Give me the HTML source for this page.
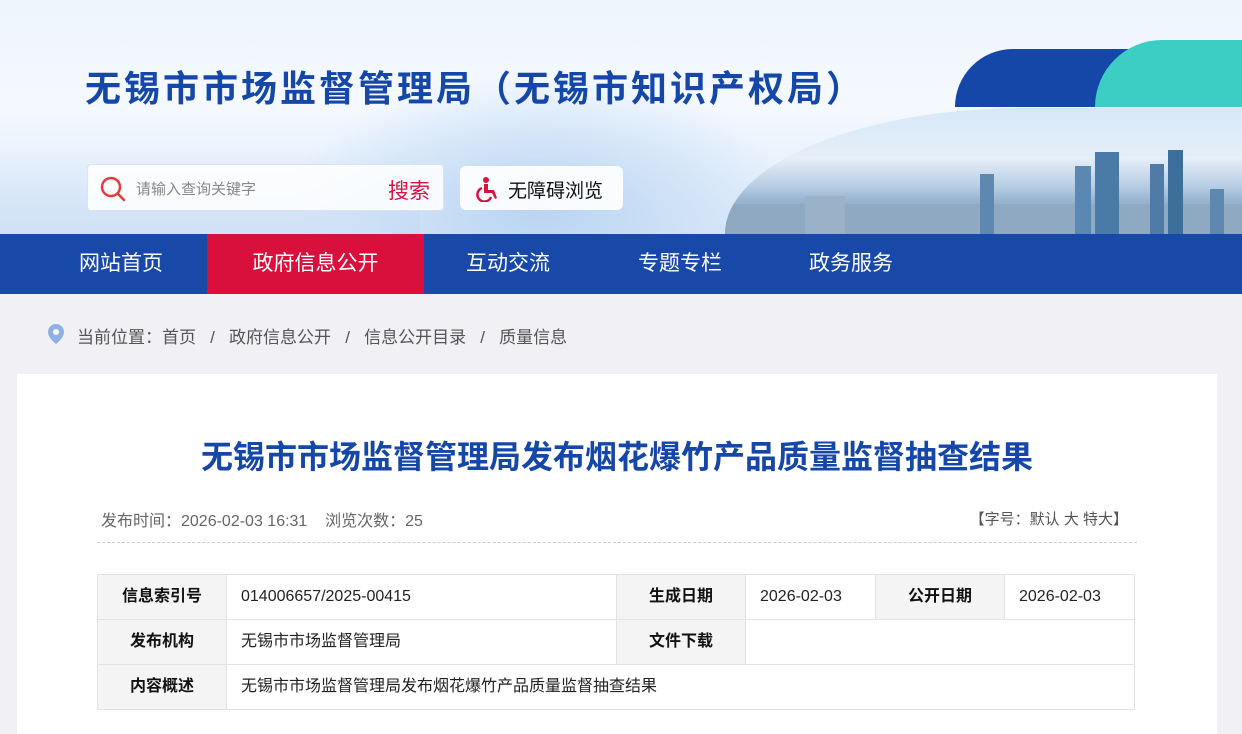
<!DOCTYPE html>
<html><head><meta charset="utf-8"><style>
*{margin:0;padding:0;box-sizing:border-box}
body{width:1242px;height:721px;overflow:hidden;background:#f1f1f5;font-family:"Liberation Sans","Noto Sans CJK SC",sans-serif;position:relative}
.hdr{position:absolute;left:0;top:0;width:1242px;height:234px;background:linear-gradient(180deg,#eef5fd 0%,#f5f9ff 45%,#dbe9f8 100%);overflow:hidden}
.bg1{position:absolute;left:300px;top:80px;width:480px;height:160px;background:radial-gradient(ellipse at 50% 80%,#b9d4f2 0%,rgba(200,222,247,.4) 55%,rgba(255,255,255,0) 75%)}
.bg0{position:absolute;left:0;top:150px;width:420px;height:90px;background:linear-gradient(180deg,rgba(220,234,250,0),#cfe1f6)}
.blue{position:absolute;left:955px;top:49px;width:500px;height:58px;background:#1547a8;border-radius:260px 0 0 0}
.teal{position:absolute;left:1095px;top:40px;width:400px;height:67px;background:#3ccdc5;border-radius:300px 0 0 0}
.city{position:absolute;left:725px;top:108px;width:520px;height:126px;border-radius:300px 0 0 0/126px 0 0 0;background:linear-gradient(180deg,#d6e8f8 0%,#e6eef8 40%,#b7cde4 62%,#8aa7c4 80%,#7594b3 100%);overflow:hidden}
.tw{position:absolute;bottom:0;background:#4f7ba6}
.title{position:absolute;left:85px;top:60px;font-size:36px;font-weight:bold;color:#1547a8;letter-spacing:3px;white-space:nowrap}
.search{position:absolute;left:87px;top:164px;width:357px;height:47px;background:rgba(255,255,255,.85);border:1px solid #dde3ec;border-radius:4px}
.search .ph{position:absolute;left:48px;top:13px;font-size:15px;color:#888}
.search .btn{position:absolute;left:300px;top:10px;font-size:21px;color:#d7133e}
.acc{position:absolute;left:460px;top:166px;width:163px;height:44px;background:rgba(255,255,255,.9);border-radius:6px}
.acc span{position:absolute;left:48px;top:10px;font-size:19px;color:#111}
.nav{position:absolute;left:0;top:234px;width:1242px;height:60px;background:#1848a8}
.nav div{position:absolute;top:0;height:60px;line-height:60px;color:#fff;font-size:21px}
.bc{position:absolute;left:77px;top:323px;font-size:17px;color:#555;white-space:pre}
.card{position:absolute;left:17px;top:374px;width:1200px;height:360px;background:#fff}
.h1{position:absolute;left:0;top:432px;width:1234px;text-align:center;font-size:32px;font-weight:bold;color:#1547a8}
.meta{position:absolute;left:101px;top:507px;font-size:16px;color:#666;white-space:pre}
.fz{position:absolute;right:114px;top:508px;font-size:15px;color:#555}
.dash{position:absolute;left:97px;top:542px;width:1040px;border-top:1px dashed #ccc}
table{position:absolute;left:97px;top:574px;width:1038px;border-collapse:collapse;font-size:16px}
td{border:1px solid #e2e2e2;height:45px;padding:0 0 0 14px;color:#222;vertical-align:middle;line-height:20px}
td.k{background:#f4f4f4;font-weight:bold;text-align:center;padding:0;color:#111}
</style></head><body>
<div class="hdr">
<div class="bg0"></div><div class="bg1"></div>
<div class="blue"></div><div class="teal"></div>
<div class="city">
<div class="tw" style="left:0;width:520px;height:30px;background:#8fa9c2"></div>
<div class="tw" style="left:80px;width:40px;height:38px;background:#9ab1c8"></div>
<div class="tw" style="left:255px;width:14px;height:60px;background:#5f88b0"></div>
<div class="tw" style="left:350px;width:16px;height:68px;background:#5b88b3"></div>
<div class="tw" style="left:370px;width:24px;height:82px;background:#4a7aa8"></div>
<div class="tw" style="left:425px;width:14px;height:70px;background:#4f7ba6"></div>
<div class="tw" style="left:443px;width:15px;height:84px;background:#3d6f9c"></div>
<div class="tw" style="left:485px;width:14px;height:45px;background:#5f88b0"></div>
</div>
<div class="title">无锡市市场监督管理局（无锡市知识产权局）</div>
<div class="search">
<svg style="position:absolute;left:11px;top:10px" width="28" height="28" viewBox="0 0 28 28"><circle cx="12" cy="12" r="9" fill="none" stroke="#e83a3a" stroke-width="2.5"/><path d="M19 19l6 6" stroke="#e83a3a" stroke-width="2.5" stroke-linecap="round"/></svg>
<span class="ph">请输入查询关键字</span><span class="btn">搜索</span></div>
<div class="acc">
<svg style="position:absolute;left:15px;top:10px" width="26" height="26" viewBox="0 0 26 26"><circle cx="11" cy="4" r="3" fill="#d7133e"/><path d="M9 8h4v6h6l3 8-2 1-3-6h-8z" fill="#d7133e"/><path d="M7 12a7 7 0 1 0 9 9" fill="none" stroke="#d7133e" stroke-width="2.5"/></svg>
<span>无障碍浏览</span></div>
</div>
<div class="nav">
<div style="left:79px">网站首页</div>
<div style="left:207px;width:217px;background:#d90f3c;text-align:center">政府信息公开</div>
<div style="left:466px">互动交流</div>
<div style="left:638px">专题专栏</div>
<div style="left:809px">政务服务</div>
</div>
<svg style="position:absolute;left:47px;top:323px" width="18" height="22" viewBox="0 0 18 22"><path d="M9 1a8 8 0 0 0-8 8c0 6 8 12 8 12s8-6 8-12a8 8 0 0 0-8-8z" fill="#8fb0e4"/><circle cx="9" cy="9" r="3" fill="#fff"/></svg>
<div class="bc">当前位置：首页   /   政府信息公开   /   信息公开目录   /   质量信息</div>
<div class="card"></div>
<div class="h1">无锡市市场监督管理局发布烟花爆竹产品质量监督抽查结果</div>
<div class="meta">发布时间：2026-02-03 16:31    浏览次数：25</div>
<div class="fz">【字号：默认 大 特大】</div>
<div class="dash"></div>
<table>
<tr><td class="k" style="width:129px">信息索引号</td><td style="width:390px">014006657/2025-00415</td><td class="k" style="width:129px">生成日期</td><td style="width:130px">2026-02-03</td><td class="k" style="width:129px">公开日期</td><td>2026-02-03</td></tr>
<tr><td class="k">发布机构</td><td>无锡市市场监督管理局</td><td class="k">文件下载</td><td colspan="3"></td></tr>
<tr><td class="k">内容概述</td><td colspan="5">无锡市市场监督管理局发布烟花爆竹产品质量监督抽查结果</td></tr>
</table>
</body></html>
